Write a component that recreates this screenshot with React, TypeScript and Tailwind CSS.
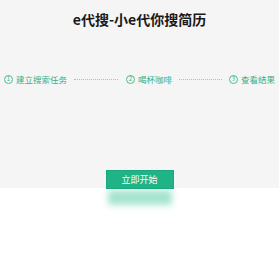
import React from "react";

const font = { fontFamily: '"Noto Sans CJK SC", "Noto Sans", sans-serif' };

function Step({ n, label, w }: { n: string; label: string; w: string }) {
  return (
    <div className="flex items-center">
      <div className="flex h-[9px] w-[9px] items-center justify-center rounded-full border border-[#4dbb93] text-[6px] leading-none text-[#3fb389]">
        {n}
      </div>
      <span className={`ml-[3px] text-[8.5px] leading-[10px] text-[#36b088] ${w}`}>{label}</span>
    </div>
  );
}

export default function App() {
  return (
    <div className="w-full bg-white" style={font}>
      <div className="flex h-[188px] flex-col bg-[#f5f5f5]">
        <h1 className="mt-[12px] text-center text-[14px] font-bold leading-[15px] text-[#1a1a1a]">
          e代搜-小e代你搜简历
        </h1>
        <div className="mt-[47px] flex items-center pl-[4px]">
          <Step n="1" label="建立搜索任务" w="w-[51px]" />
          <div className="ml-[7px] w-[44px] border-t border-dotted border-[#8fcfb6]" />
          <div className="ml-[8px]">
            <Step n="2" label="喝杯咖啡" w="w-[34px]" />
          </div>
          <div className="ml-[7px] w-[43px] border-t border-dotted border-[#8fcfb6]" />
          <div className="ml-[7px]">
            <Step n="3" label="查看结果" w="w-[34px]" />
          </div>
        </div>
        <button className="relative z-10 mx-auto mb-[-1px] mt-auto flex h-[19px] w-[68px] items-center justify-center border border-[#1aa87c] bg-[#20b386] text-[9px] leading-none text-white shadow-[0_18px_6px_-2px_rgba(60,195,150,0.45)]">
          立即开始
        </button>
      </div>
      <div className="h-[81px] bg-white" />
    </div>
  );
}
